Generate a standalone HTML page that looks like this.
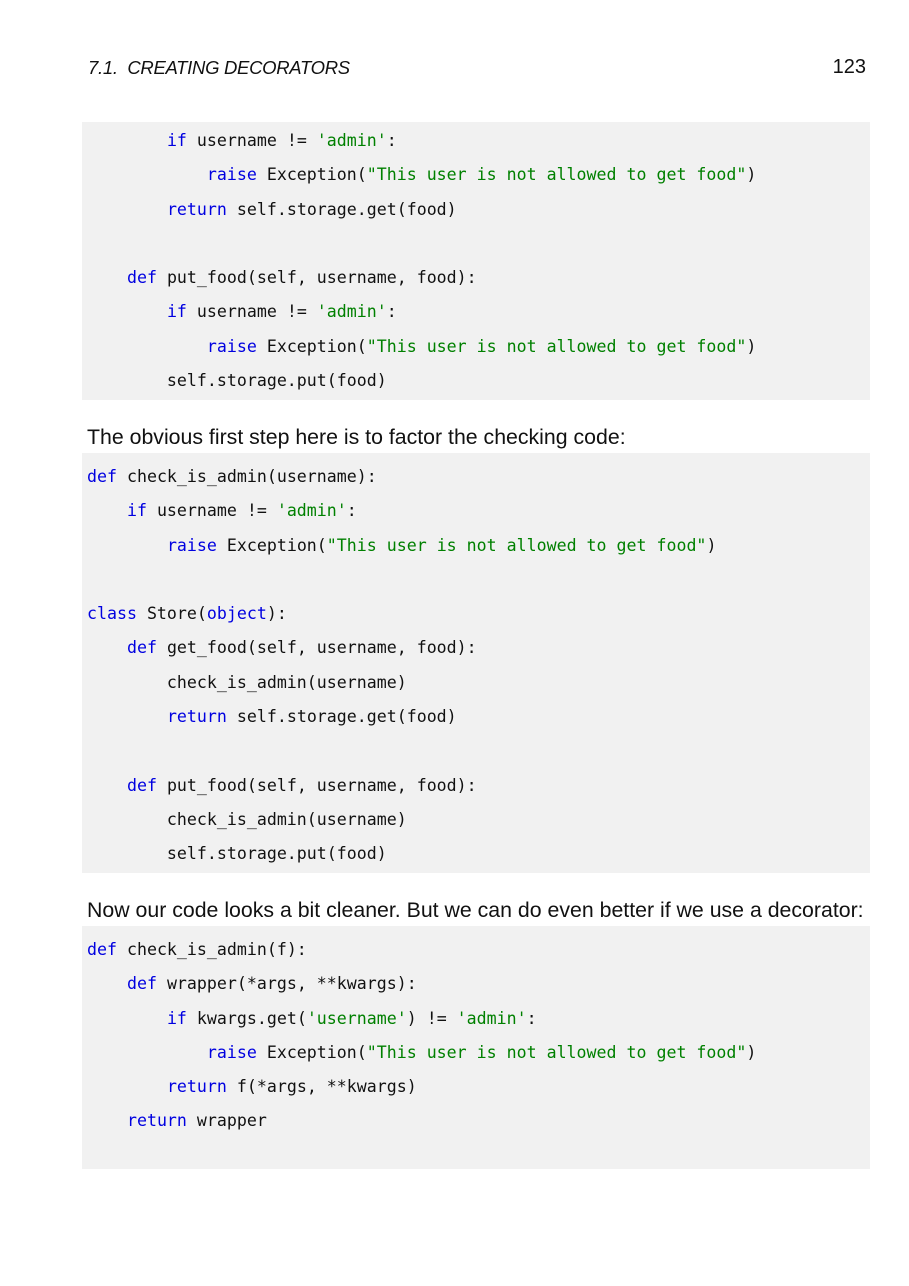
<!DOCTYPE html>
<html><head><meta charset="utf-8"><style>
body{margin:0;width:909px;height:1286px;background:#fff;position:relative;font-family:"Liberation Sans",sans-serif;color:#111}
.h{position:absolute;top:57px;left:88px;font-size:18.5px;font-style:italic;letter-spacing:-0.3px}
.pn{position:absolute;top:56px;right:43px;font-size:20px}
.p{position:absolute;left:87px;font-size:21.3px}
.c{position:absolute;left:82px;width:788px;background:#f1f1f1;margin:0;font-family:"DejaVu Sans Mono","Liberation Mono",monospace;font-size:16.6px;line-height:34.3px;color:#111;padding-left:5px;box-sizing:border-box;white-space:pre}
.k{color:#0000e0}.s{color:#008000}
</style></head><body>
<div class="h">7.1.&nbsp; CREATING DECORATORS</div>
<div class="pn">123</div>
<pre class="c" style="top:122px;height:278px;padding-top:2px">        <span class="k">if</span> username != <span class="s">'admin'</span>:
            <span class="k">raise</span> Exception(<span class="s">"This user is not allowed to get food"</span>)
        <span class="k">return</span> self.storage.get(food)

    <span class="k">def</span> put_food(self, username, food):
        <span class="k">if</span> username != <span class="s">'admin'</span>:
            <span class="k">raise</span> Exception(<span class="s">"This user is not allowed to get food"</span>)
        self.storage.put(food)</pre>
<div class="p" style="top:425px">The obvious first step here is to factor the checking code:</div>
<pre class="c" style="top:453px;height:420px;padding-top:7px"><span class="k">def</span> check_is_admin(username):
    <span class="k">if</span> username != <span class="s">'admin'</span>:
        <span class="k">raise</span> Exception(<span class="s">"This user is not allowed to get food"</span>)

<span class="k">class</span> Store(<span class="k">object</span>):
    <span class="k">def</span> get_food(self, username, food):
        check_is_admin(username)
        <span class="k">return</span> self.storage.get(food)

    <span class="k">def</span> put_food(self, username, food):
        check_is_admin(username)
        self.storage.put(food)</pre>
<div class="p" style="top:898px">Now our code looks a bit cleaner. But we can do even better if we use a decorator:</div>
<pre class="c" style="top:926px;height:243px;padding-top:7px"><span class="k">def</span> check_is_admin(f):
    <span class="k">def</span> wrapper(*args, **kwargs):
        <span class="k">if</span> kwargs.get(<span class="s">'username'</span>) != <span class="s">'admin'</span>:
            <span class="k">raise</span> Exception(<span class="s">"This user is not allowed to get food"</span>)
        <span class="k">return</span> f(*args, **kwargs)
    <span class="k">return</span> wrapper</pre>
</body></html>
